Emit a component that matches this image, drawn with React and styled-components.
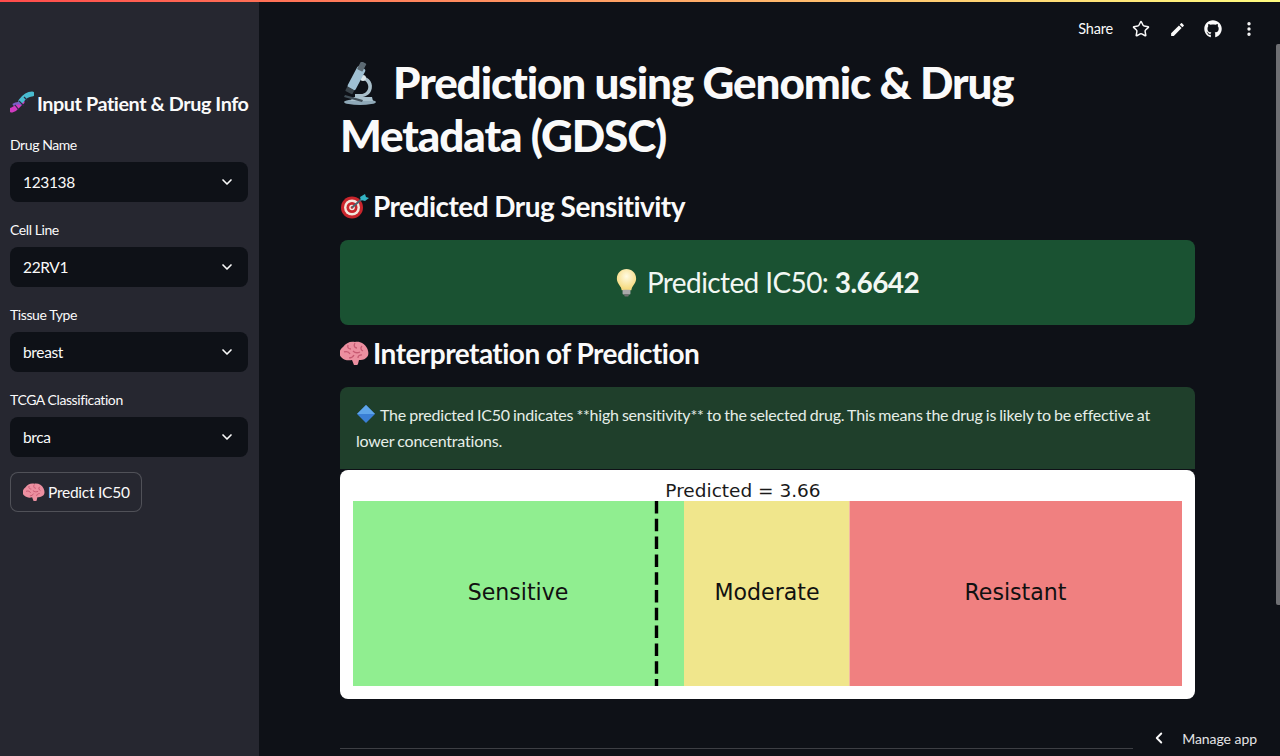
import React from "react";
import styled, { createGlobalStyle } from "styled-components";
import { ChevronDown, ChevronLeft, Star, EllipsisVertical } from "lucide-react";
import { MdEdit } from "react-icons/md";
import { FaGithub } from "react-icons/fa";

const GlobalStyle = createGlobalStyle`
  html, body {
    margin: 0;
    padding: 0;
    background: #0e1117;
    overflow: hidden;
  }
  * { box-sizing: border-box; }
`;

const fontStack = `"Lato", "Open Sans", "Liberation Sans", sans-serif`;

const Page = styled.div`
  position: relative;
  display: flex;
  width: 1280px;
  height: 756px;
  overflow: hidden;
  background: #0e1117;
  color: #fafafa;
  font-family: ${fontStack};
`;

const Rainbow = styled.div`
  position: absolute;
  top: 0;
  left: 0;
  right: 0;
  height: 2px;
  background: linear-gradient(90deg, #ff4b4b, #fffd80);
`;

const Sidebar = styled.aside`
  flex: 0 0 259px;
  height: 100%;
  padding: 90px 10px 0 10px;
  background: #262730;
  display: flex;
  flex-direction: column;
`;

const SideTitle = styled.h2`
  margin: 0 0 18px;
  font-size: 19.8px;
  line-height: 24px;
  font-weight: 700;
  letter-spacing: -0.42px;
`;

const Field = styled.div`
  height: 85px;
`;

const FieldLabel = styled.div`
  height: 29px;
  padding-top: 2px;
  font-size: 14px;
  line-height: 20px;
  letter-spacing: -0.42px;
  color: #fafafa;
`;

const Select = styled.div`
  display: flex;
  align-items: center;
  justify-content: space-between;
  width: 238px;
  height: 40px;
  padding: 0 13px;
  border-radius: 8px;
  background: #0e1117;
  font-size: 15.5px;
  letter-spacing: -0.35px;
`;

const PredictButton = styled.button`
  display: flex;
  align-items: center;
  gap: 3px;
  align-self: flex-start;
  width: 132px;
  height: 40px;
  margin-top: -1px;
  padding: 0 12px;
  border: 1px solid rgba(250, 250, 250, 0.2);
  border-radius: 8px;
  background: #262730;
  color: #fafafa;
  font-family: inherit;
  font-size: 15.5px;
  letter-spacing: -0.25px;
  white-space: nowrap;
`;

const Main = styled.main`
  flex: 1;
  height: 100%;
  padding: 56px 85px 0 81px;
  display: flex;
  flex-direction: column;
`;

const Title = styled.h1`
  margin: 0 0 25px;
  font-size: 44px;
  line-height: 53px;
  font-weight: 900;
  letter-spacing: -1.1px;
`;

const Heading = styled.h2`
  display: flex;
  align-items: center;
  gap: 4px;
  margin: 0;
  height: 38px;
  font-size: 28px;
  line-height: 38px;
  font-weight: 700;
  letter-spacing: -0.52px;
`;

const ResultBox = styled.div`
  display: flex;
  align-items: center;
  justify-content: center;
  gap: 10px;
  height: 85px;
  margin: 15px 0 9px;
  padding-bottom: 1px;
  border-radius: 8px;
  background: #1a5232;
  font-size: 28px;
  letter-spacing: -0.6px;
  color: #f2f7f3;
  b { font-weight: 700; }
`;

const InfoBox = styled.div`
  height: 82px;
  margin-top: 15px;
  padding: 15px 16px 0;
  border-radius: 8px 8px 0 0;
  background: #1f3f2b;
  font-size: 16px;
  line-height: 25.5px;
  letter-spacing: -0.2px;
  word-spacing: -0.8px;
  color: #e6eee8;
`;

const ChartCard = styled.div`
  height: 229px;
  margin-top: 1px;
  border-radius: 8px;
  background: #fff;
  overflow: hidden;
`;

const Divider = styled.hr`
  width: 793px;
  margin: 49px 0 0;
  border: 0;
  border-top: 1px solid rgba(250, 250, 250, 0.2);
`;

const Toolbar = styled.div`
  position: absolute;
  top: 16px;
  right: 13px;
  display: flex;
  align-items: center;
  height: 26px;
  color: #fafafa;
`;

const ShareLabel = styled.span`
  margin: -2px 10px 0 0;
  font-size: 14.5px;
  letter-spacing: -0.2px;
`;

const ToolIcon = styled.span`
  display: flex;
  align-items: center;
  justify-content: center;
  width: 36px;
  height: 26px;
`;

const ManageApp = styled.div`
  position: absolute;
  right: 23px;
  bottom: 9px;
  display: flex;
  align-items: center;
  gap: 14px;
  height: 18px;
  font-size: 14px;
  letter-spacing: -0.05px;
  color: #e4e4e6;
`;

const ScrollThumb = styled.div`
  position: absolute;
  top: 44px;
  right: 0;
  width: 4px;
  height: 561px;
  border-radius: 2px 0 0 2px;
  background: #6e6f73;
`;

const InlineEmoji = styled.svg`
  display: inline-block;
  flex: none;
  vertical-align: ${(p) => p.$align || "middle"};
  margin-right: ${(p) => p.$gap || 0}px;
`;

const MicroscopeEmoji = () => (
  <InlineEmoji width="40" height="44" viewBox="0 0 36 44" $gap={13} $align="-7px">
    <ellipse cx="18" cy="40" rx="16" ry="3" fill="#8fa9b8" />
    <path d="M12 35h18l1 4H8z" fill="#a8c0cc" />
    <path d="M19 14c9 1 13 8 10 15-2 4-6 6-10 6h-6v-3h6c8 0 11-11 1-15z" fill="#a9bfca" />
    <circle cx="21" cy="16" r="3" fill="#dbe6ea" />
    <rect x="10" y="4" width="9" height="24" rx="2" transform="rotate(28 14 16)" fill="#9fc0d3" />
    <rect x="17" y="0" width="6" height="9" rx="1" transform="rotate(28 20 4)" fill="#5c6a73" />
    <rect x="4" y="26" width="8" height="5" rx="1" transform="rotate(28 8 28)" fill="#39434a" />
    <path d="M3 33l18 5-1 2-18-5z" fill="#3f4c55" />
  </InlineEmoji>
);

const DnaEmoji = () => (
  <InlineEmoji width="24" height="24" viewBox="0 0 24 24" $gap={3} $align="-3px">
    <path d="M2 20c5-1 6-6 10-8" fill="none" stroke="#d13bc0" strokeWidth="5" strokeLinecap="round" />
    <path d="M3 15c3-2 6-2 9-1" fill="none" stroke="#7a5cc4" strokeWidth="2.5" />
    <path d="M11 11c3-4 7-7 11-7" fill="none" stroke="#49bcd0" strokeWidth="5" strokeLinecap="round" />
    <path d="M5 15l4 5M9 11l5 5M14 7l4 4" stroke="#2a2d45" strokeWidth="1.2" />
  </InlineEmoji>
);

const TargetEmoji = () => (
  <svg width="29" height="26" viewBox="0 0 29 26">
    <circle cx="12" cy="14.5" r="11" fill="#c9252c" />
    <circle cx="12" cy="14.5" r="8" fill="#f3e6dc" />
    <circle cx="12" cy="14.5" r="5.5" fill="#c9252c" />
    <circle cx="12" cy="14.5" r="2.8" fill="#f3e6dc" />
    <circle cx="12" cy="14.5" r="1.3" fill="#c9252c" />
    <path d="M12 14.5L23 5" stroke="#4a6470" strokeWidth="2" />
    <path d="M20 4l5-3 1 3 3 1-4 3-4-1z" fill="#32b3c4" />
  </svg>
);

const BrainEmoji = ({ size = 29 }) => (
  <InlineEmoji width={size} height={size * 0.86} viewBox="0 0 29 25">
    <path d="M3 6c3-4 7-6 12-5 5-1 10 2 12 6 2 4 2 8-1 10-2 2-5 2-7 2l-1 4c-1 2-3 2-4 1l-2-5c-4 1-8 0-10-2-4-3-3-8 1-11z" fill="#ec8fa0" />
    <path d="M8 4c-1 3 1 4 3 4M15 2c-2 3 0 5 2 5M22 5c-2 2-1 4 1 5M4 11c3-1 5 0 6 2M13 10c2 2 5 2 7 1M22 14c-2 0-4 1-4 3M9 17c2 0 4-1 5-3" fill="none" stroke="#c75a72" strokeWidth="1.3" />
  </InlineEmoji>
);

const BulbEmoji = () => (
  <svg width="21" height="29" viewBox="0 0 24 30" preserveAspectRatio="none">
    <defs>
      <radialGradient id="bulbGlow" cx="50%" cy="35%" r="60%">
        <stop offset="0" stopColor="#fffbe3" />
        <stop offset="1" stopColor="#f6da7e" />
      </radialGradient>
    </defs>
    <path d="M12 1c6 0 11 4 11 10 0 4-3 6-4.500 9-.5 1-.8 2-1 3H6.500c-.2-1-.5-2-1-3C4 17 1 15 1 11 1 5 6 1 12 1z" fill="url(#bulbGlow)" />
    <rect x="7.500" y="22.500" width="9" height="5" rx="1" fill="#a9a9a9" />
    <rect x="9.500" y="27" width="5" height="2.500" rx="1" fill="#6f6f6f" />
  </svg>
);

const DiamondEmoji = () => (
  <InlineEmoji width="20" height="20" viewBox="0 0 20 20" $gap={4} $align="-3px">
    <path d="M10 1l9 9-9 9-9-9z" fill="#3a7fd5" />
    <path d="M10 1l9 9H1z" fill="#5ea5ea" />
  </InlineEmoji>
);

const zones = [
  { x: 13, w: 331, fill: "#90ee90", label: "Sensitive", cx: 178 },
  { x: 344, w: 165.5, fill: "#f0e68c", label: "Moderate", cx: 427 },
  { x: 509.5, w: 332.5, fill: "#f08080", label: "Resistant", cx: 675.5 },
];

const chartFont = `"DejaVu Sans", sans-serif`;

const PredictionChart = () => (
  <svg width="855" height="229" viewBox="0 0 855 229">
    <text x="403" y="27" textAnchor="middle" fontFamily={chartFont} fontSize="18.5" fill="#1a1a1a">
      Predicted = 3.66
    </text>
    {zones.map((z) => (
      <g key={z.label}>
        <rect x={z.x} y="31" width={z.w} height="185" fill={z.fill} />
        <text x={z.cx} y="130" textAnchor="middle" fontFamily={chartFont} fontSize="22.1" fill="#111">
          {z.label}
        </text>
      </g>
    ))}
    <line x1="316.5" y1="31" x2="316.5" y2="216" stroke="#000" strokeWidth="3.4" strokeDasharray="12.5 5.3" />
  </svg>
);

const fields = [
  { label: "Drug Name", value: "123138" },
  { label: "Cell Line", value: "22RV1" },
  { label: "Tissue Type", value: "breast" },
  { label: "TCGA Classification", value: "brca" },
];

export default function App() {
  return (
    <Page>
      <GlobalStyle />
      <Sidebar>
        <SideTitle>
          <DnaEmoji />
          Input Patient &amp; Drug Info
        </SideTitle>
        {fields.map((f) => (
          <Field key={f.label}>
            <FieldLabel>{f.label}</FieldLabel>
            <Select>
              {f.value}
              <ChevronDown size={16} strokeWidth={2.5} />
            </Select>
          </Field>
        ))}
        <PredictButton>
          <BrainEmoji size={22} />
          Predict IC50
        </PredictButton>
      </Sidebar>
      <Main>
        <Title>
          <MicroscopeEmoji />
          Prediction using Genomic &amp; Drug Metadata (GDSC)
        </Title>
        <Heading>
          <TargetEmoji />
          Predicted Drug Sensitivity
        </Heading>
        <ResultBox>
          <BulbEmoji />
          <span>
            Predicted IC50: <b>3.6642</b>
          </span>
        </ResultBox>
        <Heading>
          <BrainEmoji />
          Interpretation of Prediction
        </Heading>
        <InfoBox>
          <DiamondEmoji />
          The predicted IC50 indicates **high sensitivity** to the selected drug. This means the drug is likely to be
          effective at lower concentrations.
        </InfoBox>
        <ChartCard>
          <PredictionChart />
        </ChartCard>
        <Divider />
      </Main>
      <Rainbow />
      <Toolbar>
        <ShareLabel>Share</ShareLabel>
        <ToolIcon>
          <Star size={18} strokeWidth={2} />
        </ToolIcon>
        <ToolIcon>
          <MdEdit size={17} />
        </ToolIcon>
        <ToolIcon>
          <FaGithub size={18} />
        </ToolIcon>
        <ToolIcon>
          <EllipsisVertical size={18} strokeWidth={2.5} />
        </ToolIcon>
      </Toolbar>
      <ManageApp>
        <ChevronLeft size={18} strokeWidth={2.5} color="#fafafa" />
        Manage app
      </ManageApp>
      <ScrollThumb />
    </Page>
  );
}
